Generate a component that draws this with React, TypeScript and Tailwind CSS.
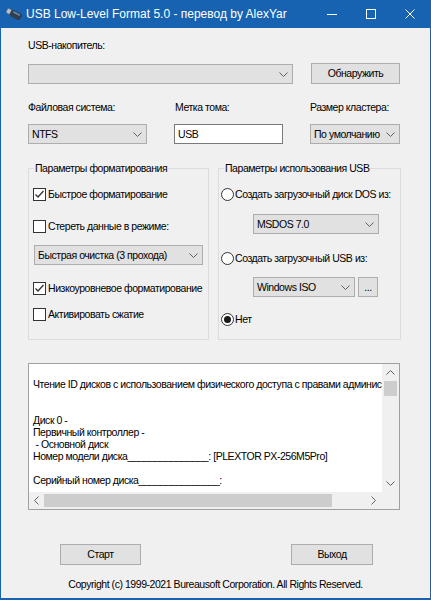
import React from "react";

// dialog body text: 8pt-style face, tightened to the classic dialog width
const T = "text-[10.5px] leading-[13px] tracking-[-0.45px]";

function Chevron({ dir = "down", color = "#606060" }: { dir?: "down" | "up" | "left" | "right"; color?: string }) {
  const pts: Record<string, string> = {
    down: "0.5,0.5 4.5,4.5 8.5,0.5",
    up: "0.5,4.5 4.5,0.5 8.5,4.5",
    left: "4.5,0.5 0.5,4.5 4.5,8.5",
    right: "0.5,0.5 4.5,4.5 0.5,8.5",
  };
  const horiz = dir === "down" || dir === "up";
  return (
    <svg width={horiz ? 9 : 5} height={horiz ? 5 : 9} viewBox={horiz ? "0 0 9 5" : "0 0 5 9"}>
      <polyline points={pts[dir]} fill="none" stroke={color} strokeWidth="1" />
    </svg>
  );
}

function Combo({ text, className }: { text?: string; className: string }) {
  return (
    <div className={`h-[20px] border border-[#adadad] bg-[#e1e1e1] flex items-center justify-between pl-[3px] pr-[4px] ${className}`}>
      <span className={`${T} text-black whitespace-nowrap`}>{text ?? ""}</span>
      <Chevron />
    </div>
  );
}

function Button({ label, className }: { label: string; className: string }) {
  return (
    <div className={`border border-[#adadad] bg-[#e1e1e1] flex items-center justify-center ${T} text-black ${className}`}>
      {label}
    </div>
  );
}

function Check({ checked, label, className = "" }: { checked?: boolean; label: string; className?: string }) {
  return (
    <div className={`flex items-center h-[13px] ${className}`}>
      <div className="w-[13px] h-[13px] border border-[#333333] bg-white flex items-center justify-center shrink-0">
        {checked && (
          <svg width="11" height="11" viewBox="0 0 11 11">
            <polyline points="1.5,5.5 4,8 9.5,2" fill="none" stroke="#333333" strokeWidth="1.3" />
          </svg>
        )}
      </div>
      <span className={`ml-[2px] ${T} whitespace-nowrap`}>{label}</span>
    </div>
  );
}

function Radio({ checked, label, className = "" }: { checked?: boolean; label: string; className?: string }) {
  return (
    <div className={`flex items-center h-[13px] ${className}`}>
      <div className="w-[13px] h-[13px] rounded-full border border-[#333333] bg-white flex items-center justify-center shrink-0">
        {checked && <div className="w-[7px] h-[7px] rounded-full bg-[#1a1a1a]" />}
      </div>
      <span className={`ml-[1px] ${T} whitespace-nowrap`}>{label}</span>
    </div>
  );
}

function UsbIcon() {
  return (
    <svg width="18" height="14" viewBox="0 0 18 14">
      <g transform="rotate(28 9 7)">
        <rect x="1" y="4.5" width="5" height="5" rx="1.5" fill="#b8c2cc" stroke="#5b6b7c" strokeWidth="0.6" />
        <rect x="5" y="3.5" width="12" height="7" rx="2.5" fill="#2f3e52" />
        <rect x="7" y="4.6" width="8" height="1.6" rx="0.8" fill="#6f86a3" />
      </g>
    </svg>
  );
}

// visible portion of the report (the box is scrolled to the left edge)
const logLines = [
  "",
  "Чтение ID дисков с использованием физического доступа с правами админис",
  "",
  "",
  "Диск 0 -",
  "Первичный контроллер -",
  " - Основной диск",
  "Номер модели диска_______________: [PLEXTOR PX-256M5Pro]",
  "",
  "Серийный номер диска_______________:",
];

export default function App() {
  return (
    <div className="w-[431px] h-[600px] bg-[#1763b2] flex flex-col font-['Liberation_Sans',Arial,sans-serif] text-black select-none">
      {/* title bar */}
      <div className="h-[28px] flex items-center text-white shrink-0">
        <div className="w-[26px] flex justify-center pl-[1px]">
          <UsbIcon />
        </div>
        <span className="text-[12px] leading-[14px] whitespace-nowrap">USB Low-Level Format 5.0 - перевод by AlexYar</span>
        <div className="flex-1" />
        <div className="w-[39px] h-[28px] flex items-center justify-center">
          <div className="w-[10px] h-px bg-white" />
        </div>
        <div className="w-[39px] h-[28px] flex items-center justify-center">
          <div className="w-[10px] h-[10px] border border-white" />
        </div>
        <div className="w-[41px] h-[28px] flex items-center justify-center pr-[2px]">
          <svg width="10" height="10" viewBox="0 0 10 10">
            <path d="M0.5 0.5 L9.5 9.5 M9.5 0.5 L0.5 9.5" stroke="white" strokeWidth="1" />
          </svg>
        </div>
      </div>

      {/* client area */}
      <div className="flex-1 mx-px mb-[2px] bg-[#f0f0f0] flex flex-col pl-[27px]">
        <div className={`mt-[11px] ${T}`}>USB-накопитель:</div>

        <div className="mt-[11px] flex items-start">
          <Combo className="w-[265px] mt-px" />
          <Button label="Обнаружить" className="ml-[18px] w-[89px] h-[21px]" />
        </div>

        <div className={`mt-[17px] flex ${T}`}>
          <div className="w-[146px]">Файловая система:</div>
          <div className="w-[136px] pl-px">Метка тома:</div>
          <div>Размер кластера:</div>
        </div>

        <div className="mt-[10px] flex">
          <div className="w-[146px]">
            <Combo text="NTFS" className="w-[119px]" />
          </div>
          <div className="w-[136px]">
            <div className={`w-[109px] h-[20px] border border-[#7a7a7a] bg-white flex items-center pl-[3px] ${T}`}>
              USB
            </div>
          </div>
          <Combo text="По умолчанию" className="w-[90px]" />
        </div>

        <div className="mt-[18px] flex">
          <fieldset className="min-w-0 w-[181px] h-[178px] border border-[#dcdcdc] flex flex-col pl-[4px]">
            <legend className={`ml-px px-[1px] ${T}`}>Параметры форматирования</legend>
            <Check checked label="Быстрое форматирование" className="mt-[13px]" />
            <Check label="Стереть данные в режиме:" className="mt-[19px]" />
            <Combo text="Быстрая очистка (3 прохода)" className="mt-[12px] w-[169px] ml-px" />
            <Check checked label="Низкоуровневое форматирование" className="mt-[17px]" />
            <Check label="Активировать сжатие" className="mt-[13px]" />
          </fieldset>

          <fieldset className="min-w-0 ml-[9px] w-[183px] h-[178px] border border-[#dcdcdc] flex flex-col pl-[2px]">
            <legend className={`ml-[3px] px-[1px] ${T}`}>Параметры использования USB</legend>
            <Radio label="Создать загрузочный диск DOS из:" className="mt-[13px]" />
            <Combo text="MSDOS 7.0" className="mt-[13px] ml-[32px] w-[126px]" />
            <Radio label="Создать загрузочный USB из:" className="mt-[18px]" />
            <div className="mt-[12px] ml-[32px] flex">
              <Combo text="Windows ISO" className="w-[102px]" />
              <Button label="..." className="ml-[3px] w-[20px] h-[20px]" />
            </div>
            <Radio checked label="Нет" className="mt-[16px]" />
          </fieldset>
        </div>

        {/* log window */}
        <div className="mt-[23px] w-[372px] h-[147px] border border-[#a0a0a0] bg-white flex flex-col">
          <div className="flex-1 flex min-h-0">
            <div className="flex-1 overflow-hidden pl-[4px] pt-[2px] text-[10.5px] leading-[12px] tracking-[-0.45px]">
              {logLines.map((l, i) => (
                <div key={i} className="h-[12px] whitespace-pre">
                  {l}
                </div>
              ))}
            </div>
            <div className="w-[17px] bg-[#f0f0f0] flex flex-col">
              <div className="h-[17px] flex items-center justify-center">
                <Chevron dir="up" />
              </div>
              <div className="flex-1 px-[2px]">
                <div className="h-[15px] bg-[#cdcdcd]" />
              </div>
              <div className="h-[17px] flex items-center justify-center">
                <Chevron dir="down" />
              </div>
            </div>
          </div>
          <div className="h-[17px] flex bg-[#f0f0f0]">
            <div className="flex-1 flex">
              <div className="w-[15px] flex items-center justify-center">
                <Chevron dir="left" />
              </div>
              <div className="flex-1 py-[2px]">
                <div className="w-[288px] h-full bg-[#cdcdcd]" />
              </div>
              <div className="w-[17px] flex items-center justify-center">
                <Chevron dir="right" />
              </div>
            </div>
            <div className="w-[17px] bg-[#f0f0f0]" />
          </div>
        </div>

        <div className="mt-[34px] flex">
          <Button label="Старт" className="ml-[32px] w-[81px] h-[21px]" />
          <Button label="Выход" className="ml-[150px] w-[82px] h-[21px]" />
        </div>

        <div className={`mt-[13px] -ml-[27px] text-center ${T}`}>
          Copyright (c) 1999-2021 Bureausoft Corporation. All Rights Reserved.
        </div>
      </div>
    </div>
  );
}
